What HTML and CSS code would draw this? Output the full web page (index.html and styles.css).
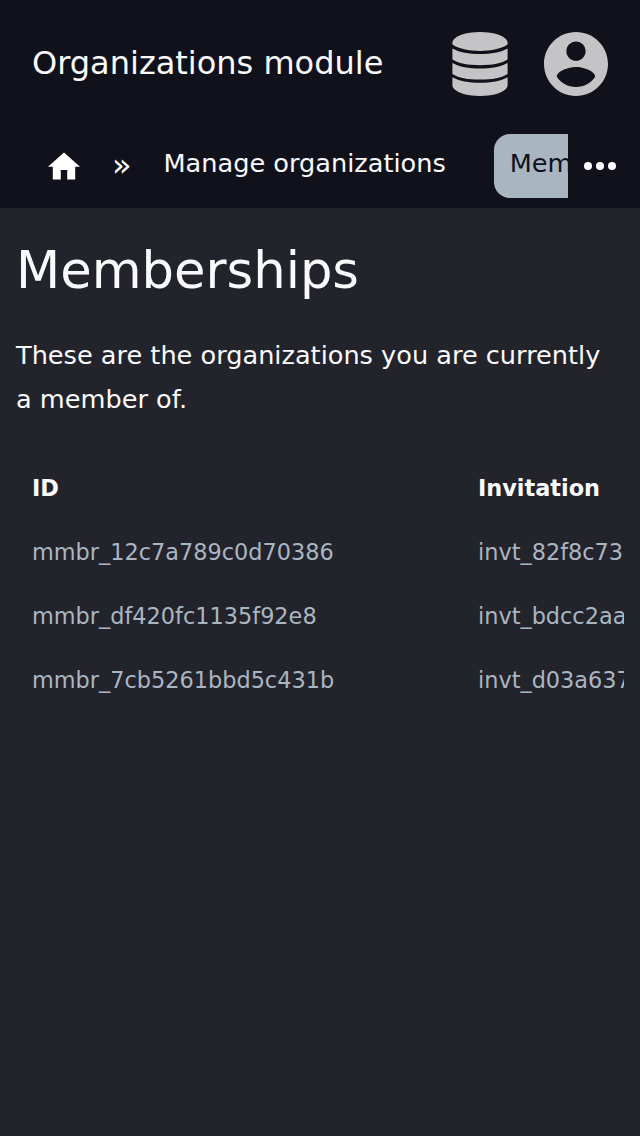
FILE: index.html
```html
<!DOCTYPE html>
<html lang="en">
<head>
<meta charset="utf-8">
<title>Memberships</title>
<link rel="stylesheet" href="styles.css">
</head>
<body>
<header class="header">
  <div class="titlebar">
    <div class="module">Organizations module</div>
    <div class="actions">
      <svg class="db" viewBox="0 0 56 64"><path d="M.4 10C2 4 13.500 0 28 0S54 4 55.600 10V12.600C50 16.800 39 19 28 19S6 16.800.4 12.600z"/><path d="M.4 16.500C7 20.300 17 22 28 22s21-1.700 27.600-5.500V27.500C50 31.300 40 33.200 28 33.200S6 31.300.4 27.500z"/><path d="M.4 30.900C7 34.700 17 36.400 28 36.400s21-1.700 27.600-5.500V41.900C50 45.700 40 47.600 28 47.600S6 45.700.4 41.900z"/><path d="M.4 45.300C7 49.100 17 50.800 28 50.800s21-1.700 27.600-5.500V54C54 60 42.500 64 28 64S2 60 .4 54z"/></svg>
      <svg class="user" viewBox="2 2 20 20"><path d="M12 2C6.480 2 2 6.480 2 12s4.480 10 10 10 10-4.480 10-10S17.520 2 12 2zm0 3c1.660 0 3 1.340 3 3s-1.340 3-3 3-3-1.340-3-3 1.340-3 3-3zm0 14.200c-2.500 0-4.710-1.280-6-3.220.030-1.990 4-3.080 6-3.080 1.990 0 5.970 1.090 6 3.080-1.290 1.940-3.500 3.220-6 3.220z"/></svg>
    </div>
  </div>
  <nav class="nav">
    <div class="crumbs">
      <svg class="home" viewBox="2 3 20 17"><path d="M10 20v-6h4v6h5v-8h3L12 3 2 12h3v8z"/></svg>
      <span class="sep">»</span>
      <span class="link">Manage organizations</span>
      <span class="tab">Memberships</span>
    </div>
    <svg class="more" viewBox="0 0 32 8"><circle cx="4" cy="4" r="4"/><circle cx="16" cy="4" r="4"/><circle cx="28" cy="4" r="4"/></svg>
  </nav>
</header>
<main class="main">
  <h1 class="heading">Memberships</h1>
  <p class="intro">These are the organizations you are currently a member of.</p>
  <div class="table">
    <div class="row head"><span>ID</span><span>Invitation</span></div>
    <div class="row"><span>mmbr_12c7a789c0d70386</span><span>invt_82f8c73</span></div>
    <div class="row"><span>mmbr_df420fc1135f92e8</span><span>invt_bdcc2aa</span></div>
    <div class="row"><span>mmbr_7cb5261bbd5c431b</span><span>invt_d03a637</span></div>
  </div>
</main>
</body>
</html>
```
FILE: styles.css
```css
* { box-sizing: border-box; }
body { margin: 0; min-height: 1136px; background: #23232c; color: #f9fafb; font-family: "DejaVu Sans", sans-serif; }
.header { height: 208px; background: #11111b; }
.titlebar { height: 128px; padding: 0 32px; display: flex; align-items: center; justify-content: space-between; }
.module { font-size: 32px; line-height: 48px; padding-bottom: 2px; white-space: nowrap; }
.actions { display: flex; gap: 36px; }
.actions svg { height: 64px; fill: #c4c4c6; }
.db { width: 56px; }
.user { width: 64px; }
.nav { height: 80px; display: flex; }
.crumbs { width: 568px; padding: 6px 0 0 48px; display: flex; overflow: hidden; white-space: nowrap; font-size: 25.6px; line-height: 58px; }
.home { width: 32px; height: 28px; margin-top: 18px; fill: #fff; flex: none; }
.sep { margin: 2px 32px 0; width: 19.5px; font-size: 32px; flex: none; }
.tab { margin-left: 48px; height: 64px; padding: 0 16px; border-radius: 16px; background: #a9b6c2; color: #11111b; }
.more { width: 32px; height: 8px; margin: 34px 0 0 16px; fill: #fff; }
.main { padding: 24px 16px; }
.heading { margin: 0; font-size: 51.2px; line-height: 77px; font-weight: 400; }
.intro { margin: 24px 0 35px; font-size: 25.6px; line-height: 44px; }
.table { overflow: hidden; font-size: 22.4px; line-height: 64px; }
.row { display: grid; grid-template-columns: 446px 200px; padding-left: 16px; height: 64px; color: #a9b6c2; white-space: nowrap; }
.head { color: #f9fafb; font-weight: 700; }
```
